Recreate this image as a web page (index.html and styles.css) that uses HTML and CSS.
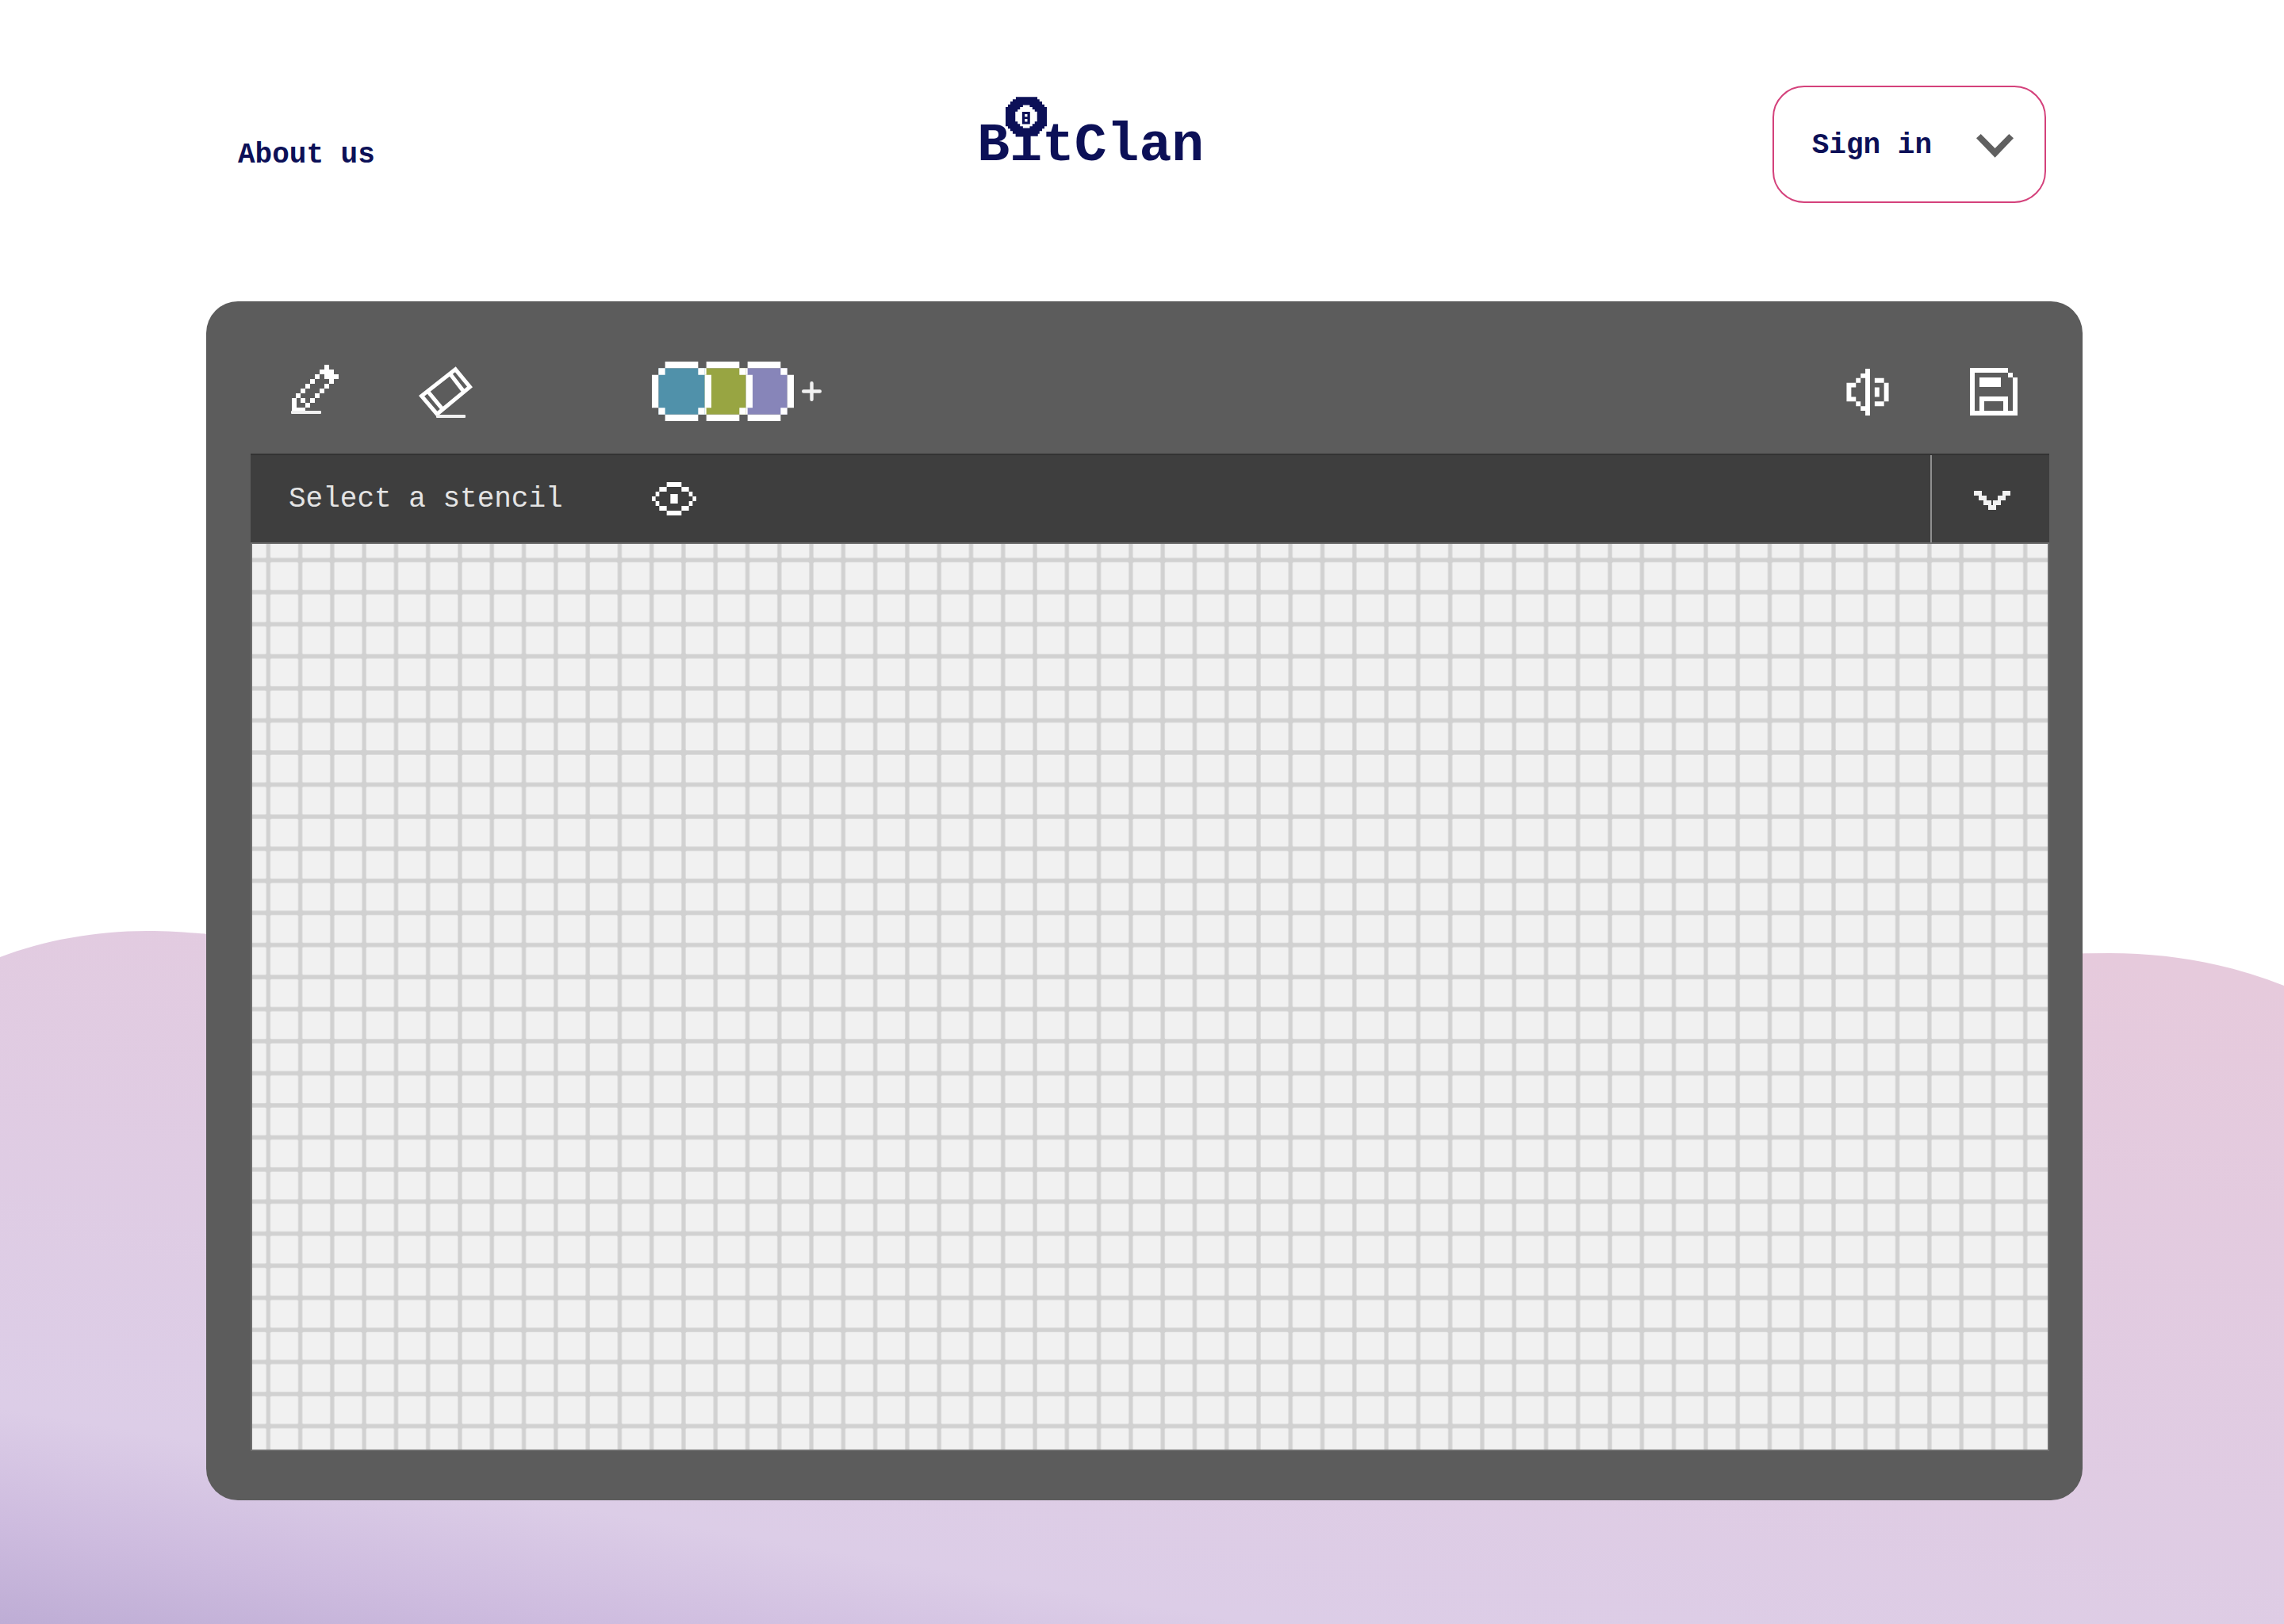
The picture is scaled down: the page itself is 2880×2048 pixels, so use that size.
FILE: index.html
```html
<!DOCTYPE html>
<html lang="en">
<head>
  <meta charset="utf-8">
  <meta name="viewport" content="width=device-width, initial-scale=1">
  <title>BitClan</title>
  <link rel="stylesheet" href="styles.css">
</head>
<body>
  <svg class="wave" viewBox="0 0 2880 874" preserveAspectRatio="none" aria-hidden="true">
    <defs>
      <linearGradient id="dusk" gradientUnits="userSpaceOnUse" x1="0" y1="874" x2="217" y2="-387">
        <stop offset="0" stop-color="#beadd5"/>
        <stop offset="0.1" stop-color="#cebcdf"/>
        <stop offset="0.21" stop-color="#dccde7"/>
        <stop offset="1" stop-color="#e6cadc"/>
      </linearGradient>
    </defs>
    <path fill="url(#dusk)" d="M0 33C55 12 120 0 185 0C212 0 240 2 262 4C800 60 1100 200 1500 200S2200 28 2660 28C2740 28 2810 42 2880 69V874H0Z"/>
  </svg>

  <header class="header">
    <nav class="nav"><a class="nav-link" href="#about">About us</a></nav>
    <a class="logo" href="#home">
      <svg class="logo-ball" viewBox="174 66 157 150" aria-hidden="true">
        <path fill="#0c1057" d="M213 66H295V75H303V84H313V95H322V105H331V178H322V187H313V196H303V207H297V216H213V207H201V196H192V187H183V178H174V105H183V95H192V84H201V75H213Z"/>
        <path fill="#fff" d="M240 97V105H229V114H220V122H211V160H220V169H229V178H240V185H266V178H276V169H285V160H294V122H285V114H276V105H266V97Z"/>
        <path fill="#0c1057" fill-rule="evenodd" d="M237 123H267V170H237ZM247 132V142H257V132ZM247 150V161H257V150Z"/>
      </svg>
      <span class="logo-name">BitClan</span>
    </a>
    <button class="sign-in" type="button">
      <span>Sign in</span>
      <svg class="sign-in-arrow" viewBox="0 0 47 30" aria-hidden="true"><path fill="#606060" d="M0 5.3L5.7 0L23.6 18L41.3 0L47 5.3L23.6 29.7Z"/></svg>
    </button>
  </header>

  <main class="editor">
    <div class="toolbar">
      <button class="tool tool-pencil" type="button" aria-label="Pencil">
        <svg viewBox="0 0 60 76" fill="#fff" aria-hidden="true">
          <path d="M42 4h6v6h-6zM36 10h18v6h-18zM30 16h6v6h-6zM42 16h18v6h-18zM24 22h6v6h-6zM48 22h6v6h-6zM18 28h6v6h-6zM42 28h6v6h-6zM12 34h6v6h-6zM36 34h6v6h-6zM6 40h6v6h-6zM30 40h6v6h-6zM1 46h6v18h-6zM12 46h6v6h-6zM24 46h6v6h-6zM18 52h6v6h-6zM7 58h11v6h-11z"/>
          <rect x="0" y="62" width="38" height="4" rx="1" fill="#f0f0f0"/>
        </svg>
      </button>
      <button class="tool tool-eraser" type="button" aria-label="Eraser">
        <svg viewBox="0 0 68 76" aria-hidden="true">
          <path fill="none" stroke="#fff" stroke-width="5" d="M46.3 9.8L64.5 31.9L23.1 66.2L3.6 43.4ZM11.8 38L30 60M39.8 15.8L56.6 37.6"/>
          <rect x="22" y="67" width="37" height="4" rx="1" fill="#f0f0f0"/>
        </svg>
      </button>
      <div class="palette">
        <button class="swatch swatch-teal" type="button" aria-label="Teal">
          <svg viewBox="0 0 9 9" aria-hidden="true"><path fill="currentColor" d="M1 1h7v7h-7z"/><path fill="#fff" d="M2 0h5v1h-5zM2 8h5v1h-5zM0 2h1v5h-1zM8 2h1v5h-1zM1 1h1v1h-1zM7 1h1v1h-1zM1 7h1v1h-1zM7 7h1v1h-1z"/></svg>
        </button>
        <button class="swatch swatch-olive" type="button" aria-label="Olive">
          <svg viewBox="0 0 9 9" aria-hidden="true"><path fill="currentColor" d="M1 1h7v7h-7z"/><path fill="#fff" d="M2 0h5v1h-5zM2 8h5v1h-5zM0 2h1v5h-1zM8 2h1v5h-1zM1 1h1v1h-1zM7 1h1v1h-1zM1 7h1v1h-1zM7 7h1v1h-1z"/></svg>
        </button>
        <button class="swatch swatch-violet" type="button" aria-label="Violet">
          <svg viewBox="0 0 9 9" aria-hidden="true"><path fill="currentColor" d="M1 1h7v7h-7z"/><path fill="#fff" d="M2 0h5v1h-5zM2 8h5v1h-5zM0 2h1v5h-1zM8 2h1v5h-1zM1 1h1v1h-1zM7 1h1v1h-1zM1 7h1v1h-1zM7 7h1v1h-1z"/></svg>
        </button>
        <button class="add-color" type="button" aria-label="Add a colour">
          <svg viewBox="0 0 25 25" aria-hidden="true"><path stroke="#f1f1f1" stroke-width="4.4" stroke-linecap="round" d="M12.5 2.2V22.8M2.2 12.5H22.8"/></svg>
        </button>
      </div>
      <div class="file-tools">
        <button class="tool tool-sound" type="button" aria-label="Sound">
          <svg viewBox="0 0 9 10" fill="#fff" aria-hidden="true"><path d="M4 0h1v10h-1zM3 1h1v1h-1zM2 2h1v1h-1zM0 3h2v1h-1v2h1v1h-2zM2 7h1v1h-1zM3 8h1v1h-1zM6 2h2v1h-2zM6 4h1v2h-1zM8 3h1v4h-1zM6 7h2v1h-2z"/></svg>
        </button>
        <button class="tool tool-save" type="button" aria-label="Save">
          <svg viewBox="0 0 10 10" fill="#fff" aria-hidden="true"><path d="M0 0h8v1h-7v8h1v-3h6v3h1v-7h1v8h-10zM8 1h1v1h-1zM2 2h4.5v2h-4.5zM3 7v2h4v-2z" fill-rule="evenodd"/></svg>
        </button>
      </div>
    </div>

    <div class="stencil-bar">
      <button class="stencil-select" type="button">Select a stencil</button>
      <button class="stencil-preview" type="button" aria-label="Show stencil">
        <svg viewBox="0 0 12 7" preserveAspectRatio="none" fill="#fff" aria-hidden="true"><path d="M4 0h4v1h-4zM2 1h2v1h-2zM8 1h2v1h-2zM1 2h1v1h-1zM10 2h1v1h-1zM0 3h1v1h-1zM11 3h1v1h-1zM1 4h1v1h-1zM10 4h1v1h-1zM2 5h2v1h-2zM8 5h2v1h-2zM4 6h4v1h-4zM5 2.5h2v2h-2z"/></svg>
      </button>
      <button class="stencil-toggle" type="button" aria-label="Open stencil list">
        <svg viewBox="0 0 138 72" fill="#f1f1f1" aria-hidden="true"><path d="M0 0h30v18h-30zM108 0h30v18h-30zM18 18h30v18h-30zM90 18h30v18h-30zM36 36h30v18h-30zM72 36h30v18h-30zM54 54h30v18h-30z"/></svg>
      </button>
    </div>

    <svg class="board" role="img" aria-label="Pixel board">
      <defs>
        <pattern id="cell" patternUnits="userSpaceOnUse" x="20.3" y="20.3" width="40.28" height="40.45">
          <rect width="40.28" height="40.45" fill="#d1d1d1"/>
          <rect x="2.6" y="2.6" width="35.1" height="35.2" rx="1.5" fill="#f1f1f1"/>
        </pattern>
      </defs>
      <rect width="100%" height="100%" fill="url(#cell)"/>
    </svg>
  </main>
</body>
</html>
```
FILE: styles.css
```css
* {
  box-sizing: border-box;
}

body {
  position: relative;
  min-height: 100vh;
  margin: 0;
  padding-bottom: 156px;
  background: #fff;
  color: #0c1057;
  font-family: "Courier New", "Liberation Mono", monospace;
  font-size: 36px;
  line-height: 40px;
}

button {
  margin: 0;
  padding: 0;
  border: 0;
  background: none;
  color: inherit;
  font: inherit;
  cursor: pointer;
}

svg {
  display: block;
}

/* Backdrop behind the whole page */
.wave {
  position: absolute;
  bottom: 0;
  left: 0;
  z-index: -1;
  width: 100%;
  height: 874px;
}

/* Header */
.header {
  display: grid;
  grid-template-columns: 932fr 1002fr auto;
  align-items: start;
  padding: 108px 300px 124px;
}

.nav {
  padding-top: 68px;
}

.nav-link {
  color: inherit;
  font-weight: 700;
  text-decoration: none;
}

.logo {
  position: relative;
  justify-self: start;
  padding-top: 44px;
  color: inherit;
  text-decoration: none;
}

.logo-ball {
  position: absolute;
  top: 14px;
  left: 36px;
  width: 52px;
  height: 50px;
}

.logo-name {
  display: block;
  font-size: 68px;
  font-weight: 700;
  line-height: 64px;
}

.sign-in {
  display: flex;
  align-items: center;
  gap: 56px;
  height: 148px;
  padding: 4px 39px 0 48px;
  border: 2px solid #d4417b;
  border-radius: 40px;
  font-weight: 700;
}

.sign-in-arrow {
  width: 47px;
  height: 30px;
}

/* Editor panel */
.editor {
  margin: 0 254px 0 260px;
  padding: 0 42px 62px 56px;
  border-radius: 40px;
  background: #5c5c5c;
}

.toolbar {
  display: flex;
  align-items: flex-start;
  height: 192px;
  padding: 76px 40px 0 51px;
}

.tool-pencil svg {
  width: 60px;
  height: 76px;
}

.tool-eraser {
  margin-left: 101px;
}

.tool-eraser svg {
  width: 68px;
  height: 76px;
}

.palette {
  display: flex;
  align-items: center;
  margin-left: 226px;
}

.swatch {
  position: relative;
}

.swatch + .swatch {
  margin-left: -23px;
}

.swatch svg {
  width: 75px;
  height: 75px;
}

.swatch-teal {
  z-index: 3;
  color: #5091aa;
}

.swatch-olive {
  z-index: 2;
  color: #98a542;
}

.swatch-violet {
  z-index: 1;
  color: #8785b9;
}

.add-color {
  margin-left: 10px;
}

.add-color svg {
  width: 25px;
  height: 25px;
}

.file-tools {
  display: flex;
  gap: 102px;
  margin-left: auto;
  padding-top: 8px;
}

.tool-sound svg {
  width: 54px;
  height: 59px;
}

.tool-save svg {
  width: 60px;
  height: 60px;
}

/* Stencil bar */
.stencil-bar {
  display: flex;
  align-items: center;
  height: 112px;
  padding-left: 48px;
  border-top: 2px solid #333;
  background: #3e3e3e;
}

.stencil-select {
  width: 458px;
  padding-top: 2px;
  color: #e4e4e4;
  text-align: left;
}

.stencil-preview svg {
  width: 56px;
  height: 42px;
}

.stencil-toggle {
  display: flex;
  align-items: center;
  justify-content: center;
  align-self: stretch;
  width: 150px;
  margin-left: auto;
  padding: 4px 0 0 3px;
  border-left: 2px solid #8f8f8f;
}

.stencil-toggle svg {
  width: 46px;
  height: 24px;
}

.board {
  width: 100%;
  height: 1146px;
  border: 2px solid #6e6e6e;
}
```
